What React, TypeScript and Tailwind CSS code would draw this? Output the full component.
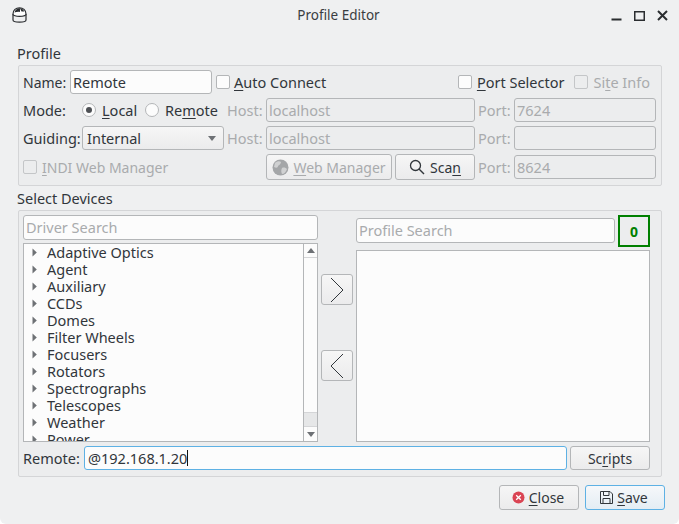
import React from "react";

const font = { fontFamily: '"Noto Sans", sans-serif' };

function Field({ value, placeholder, className = "", disabled = false }: { value?: string; placeholder?: string; className?: string; disabled?: boolean }) {
  return (
    <div className={`h-6 flex items-center rounded-[3px] border border-[#b4b6b8] px-[2px] text-[14.5px] shrink-0 ${disabled ? "bg-[#ecedee] text-[#a9abad]" : "bg-[#fcfcfc] text-[#31363b]"} ${className}`}>
      {value}
      {placeholder && <span className="text-[#a9abad]">{placeholder}</span>}
    </div>
  );
}

function Check({ disabled = false }: { disabled?: boolean }) {
  return <span className={`block w-[14px] h-[14px] shrink-0 rounded-[2px] border ${disabled ? "border-[#c4c6c8] bg-[#ecedee]" : "border-[#b4b6b8] bg-[#fcfcfc]"}`} />;
}

function Radio({ on = false }: { on?: boolean }) {
  return (
    <span className="w-[14px] h-[14px] shrink-0 rounded-full border border-[#b4b6b8] bg-[#fcfcfc] flex items-center justify-center">
      {on && <span className="w-[6px] h-[6px] rounded-full bg-[#4d5054]" />}
    </span>
  );
}

function Btn({ children, className = "", focused = false }: { children: React.ReactNode; className?: string; focused?: boolean }) {
  return (
    <div className={`flex items-center justify-center rounded-[3px] border bg-gradient-to-b text-[14px] shrink-0 ${focused ? "border-[#5eb1e4] from-[#f6f8fa] to-[#e4edf4]" : "border-[#b4b6b8] from-[#f6f6f6] to-[#ebebec]"} ${className}`}>
      {children}
    </div>
  );
}

function Triangle() {
  return (
    <svg width="5" height="9" viewBox="0 0 5 9" className="shrink-0">
      <path d="M0.5 0.5 L4.8 4.5 L0.5 8.5 Z" fill="#6e7175" />
    </svg>
  );
}

const categories = ["Adaptive Optics", "Agent", "Auxiliary", "CCDs", "Domes", "Filter Wheels", "Focusers", "Rotators", "Spectrographs", "Telescopes", "Weather", "Power"];

export default function App() {
  return (
    <div style={font} className="w-[679px] h-[524px] bg-[#eff0f1] text-[#31363b] text-[14.5px] leading-[17px] flex flex-col overflow-hidden rounded-b-[6px]">
      {/* Title bar */}
      <div className="h-[30px] flex items-center pl-[12px] pr-[11px] shrink-0">
        <div className="w-[60px] shrink-0 flex">
          <svg width="15" height="16" viewBox="0 0 15 16" className="shrink-0">
            <path d="M1 7 V13 C1 14.5 4 15.2 7.5 15.2 C11 15.2 14 14.5 14 13 V7" fill="none" stroke="#2a2d30" strokeWidth="1.2" />
            <path d="M1 7 C1 3 4 0.8 7.5 0.8 C11 0.8 14 3 14 7 C14 8.6 11 9.4 7.5 9.4 C4 9.4 1 8.6 1 7 Z" fill="#fff" stroke="#2a2d30" strokeWidth="1.2" />
            <path d="M2.5 5.5 C3 3 5 1.2 8 1.2 L8 5 C6 4.6 4 5 2.5 5.5 Z" fill="#2a2d30" />
            <path d="M8 1.2 C10 1.2 11.5 2.6 12.3 4.6 L9.5 4.4 Z" fill="#2a2d30" />
          </svg>
        </div>
        <div className="flex-1 text-center pr-[3px] text-[#3a3d41] text-[13.5px]">Profile Editor</div>
        <div className="w-[60px] flex items-center gap-[12px] justify-end shrink-0">
          <svg width="11" height="11" viewBox="0 0 11 11" className="shrink-0"><rect x="0.5" y="8.5" width="10" height="2" fill="#2a2d30" /></svg>
          <svg width="11" height="11" viewBox="0 0 11 11" className="shrink-0"><rect x="0.75" y="1.75" width="9.5" height="8.5" fill="none" stroke="#2a2d30" strokeWidth="1.5" /></svg>
          <svg width="11" height="11" viewBox="0 0 11 11" className="shrink-0"><path d="M1 1 L10 10 M10 1 L1 10" stroke="#2a2d30" strokeWidth="2" /></svg>
        </div>
      </div>

      {/* Profile group */}
      <div className="pl-[17px] mt-[14px] h-[18px] flex items-center shrink-0">Profile</div>
      <div className="ml-[18px] w-[644px] h-[121px] mt-[3px] border border-[#d4d5d7] rounded-[2px] bg-[#ecedee] pl-[4px] pr-[5px] pt-[4px] flex flex-col gap-[4px] shrink-0">
        <div className="flex items-center h-6">
          <span className="w-[47px] text-[14px]">Name:</span>
          <Field value="Remote" className="w-[142px]" />
          <span className="ml-[4px]"><Check /></span>
          <span className="ml-[4px]"><u className="underline-offset-2">A</u>uto Connect</span>
          <div className="flex-1" />
          <Check />
          <span className="ml-[5px]"><u className="underline-offset-2">P</u>ort Selector</span>
          <span className="ml-[10px]"><Check disabled /></span>
          <span className="ml-[5px] mr-[6px] text-[#a9abad]">Si<u className="underline-offset-2">t</u>e Info</span>
        </div>
        <div className="flex items-center h-6">
          <span className="w-[59px]">Mode:</span>
          <Radio on />
          <span className="ml-[6px] w-[43px]"><u className="underline-offset-2">L</u>ocal</span>
          <Radio />
          <span className="ml-[6px] w-[62px]">Re<u className="underline-offset-2">m</u>ote</span>
          <span className="w-[39px] text-[#a9abad]">Host:</span>
          <Field disabled value="localhost" className="w-[209px]" />
          <span className="ml-[3px] w-[36px] text-[#a9abad]">Port:</span>
          <Field disabled value="7624" className="w-[142px]" />
        </div>
        <div className="flex items-center h-6">
          <span className="w-[59px]">Guiding:</span>
          <div className="w-[142px] h-6 rounded-[3px] border border-[#b4b6b8] bg-gradient-to-b from-[#f6f6f6] to-[#ebebec] flex items-center pl-[4px] pr-[7px] justify-between shrink-0">
            <span>Internal</span>
            <svg width="8" height="5" viewBox="0 0 8 5"><path d="M0 0 H8 L4 5 Z" fill="#6e7175" /></svg>
          </div>
          <span className="ml-[3px] w-[39px] text-[#a9abad]">Host:</span>
          <Field disabled value="localhost" className="w-[209px]" />
          <span className="ml-[3px] w-[36px] text-[#a9abad]">Port:</span>
          <Field disabled className="w-[142px]" />
        </div>
        <div className="flex items-center h-[26px]">
          <Check disabled />
          <span className="ml-[5px] w-[224px] text-[14px] text-[#a9abad]"><u className="underline-offset-2">I</u>NDI Web Manager</span>
          <Btn className="w-[126px] h-[26px] text-[#a9abad] gap-[4px]">
            <svg width="17" height="17" viewBox="0 0 17 17" className="shrink-0">
              <circle cx="8.5" cy="8.5" r="8" fill="#a4a6a8" />
              <path d="M3 4 C5 2 8 2 9 3 C9 5 7 6 6 7 C6 9 4 9 2 8 Z M10 9 C12 8 14 9 15 10 C14 13 12 15 10 15 C9 13 9 11 10 9 Z" fill="#d0d1d2" />
            </svg>
            <span><u className="underline-offset-2">W</u>eb Manager</span>
          </Btn>
          <Btn className="ml-[3px] w-[80px] h-[26px] gap-[5px]">
            <svg width="16" height="16" viewBox="0 0 16 16" className="shrink-0">
              <circle cx="6.5" cy="6.5" r="5" fill="none" stroke="#31363b" strokeWidth="1.3" />
              <path d="M10 10 L15 15" stroke="#31363b" strokeWidth="1.4" />
            </svg>
            <span>Sca<u className="underline-offset-2">n</u></span>
          </Btn>
          <span className="ml-[3px] w-[36px] text-[#a9abad]">Port:</span>
          <Field disabled value="8624" className="w-[142px]" />
        </div>
      </div>

      {/* Select Devices group */}
      <div className="pl-[17px] mt-[3px] h-[18px] flex items-center shrink-0">Select Devices</div>
      <div className="ml-[18px] w-[644px] h-[267px] mt-[3px] border border-[#d4d5d7] rounded-[2px] bg-[#ecedee] pl-[4px] pr-[11px] pt-[4px] flex flex-col shrink-0">
        <div className="flex h-[227px]">
          <div className="w-[295px] flex flex-col gap-[3px] shrink-0">
            <Field placeholder="Driver Search" className="w-[295px] h-[25px]" />
            <div className="h-[199px] border border-[#b4b6b8] bg-[#fcfcfc] flex overflow-hidden">
              <div className="flex-1 flex flex-col overflow-hidden">
                {categories.map((c) => (
                  <div key={c} className="h-[17px] shrink-0 flex items-center pl-[8px] gap-[10px]">
                    <Triangle />
                    <span className="leading-[17px]">{c}</span>
                  </div>
                ))}
              </div>
              <div className="w-[14px] border-l border-[#b4b6b8] flex flex-col shrink-0">
                <div className="h-[14px] flex items-center justify-center border-b border-[#d4d5d7]">
                  <svg width="8" height="5" viewBox="0 0 8 5"><path d="M0 5 H8 L4 0 Z" fill="#6e7175" /></svg>
                </div>
                <div className="flex-1" />
                <div className="h-[15px] bg-[#e6e7e8] border-y border-[#d4d5d7]" />
                <div className="h-[14px] flex items-center justify-center">
                  <svg width="8" height="5" viewBox="0 0 8 5"><path d="M0 0 H8 L4 5 Z" fill="#6e7175" /></svg>
                </div>
              </div>
            </div>
          </div>
          <div className="w-[38px] flex flex-col items-center pt-[59px] gap-[45px] shrink-0">
            <Btn className="w-[32px] h-[31px]">
              <svg width="14" height="26" viewBox="0 0 14 26"><path d="M1 1 L13 13 L1 25" fill="none" stroke="#31363b" strokeWidth="1" /></svg>
            </Btn>
            <Btn className="w-[32px] h-[31px]">
              <svg width="14" height="26" viewBox="0 0 14 26"><path d="M13 1 L1 13 L13 25" fill="none" stroke="#31363b" strokeWidth="1" /></svg>
            </Btn>
          </div>
          <div className="w-[294px] flex flex-col gap-[3px] shrink-0">
            <div className="flex h-[32px] items-start justify-between">
              <Field placeholder="Profile Search" className="w-[259px] h-[25px] mt-[3px]" />
              <div className="w-[32px] h-[32px] border-2 border-[#008000] flex items-center justify-center font-bold text-[#008000] text-[14px]">0</div>
            </div>
            <div className="h-[192px] border border-[#b4b6b8] bg-[#fcfcfc]" />
          </div>
        </div>
        <div className="flex items-center h-6 mt-[4px]">
          <span className="w-[61px]">Remote:</span>
          <div className="w-[483px] h-6 rounded-[3px] border border-[#5eb1e4] bg-[#fcfcfc] flex items-center px-[3px] shrink-0">
            <span>@192.168.1.20</span>
            <span className="w-px h-[16px] bg-[#111]" />
          </div>
          <Btn className="ml-[3px] w-[80px] h-6">
            <span>Sc<u className="underline-offset-2">r</u>ipts</span>
          </Btn>
        </div>
      </div>

      {/* Bottom buttons */}
      <div className="flex justify-end gap-[6px] pr-[14px] mt-[8px] shrink-0">
        <Btn className="w-[80px] h-[25px] gap-[4px] pr-[2px]">
          <svg width="13" height="13" viewBox="0 0 13 13" className="shrink-0">
            <circle cx="6.5" cy="6.5" r="6" fill="#da4453" />
            <path d="M4.2 4.2 L8.8 8.8 M8.8 4.2 L4.2 8.8" stroke="#fff" strokeWidth="1.3" />
          </svg>
          <span><u className="underline-offset-2">C</u>lose</span>
        </Btn>
        <Btn focused className="w-[80px] h-[25px] gap-[4px] pr-[2px]">
          <svg width="13" height="13" viewBox="0 0 13 13" className="shrink-0">
            <path d="M0.5 0.5 H10 L12.5 3 V12.5 H0.5 Z" fill="none" stroke="#31363b" strokeWidth="1" />
            <path d="M3.5 1 V4.5 H9 V1" fill="none" stroke="#31363b" strokeWidth="1" />
            <path d="M3 12 V7.5 H10 V12" fill="none" stroke="#31363b" strokeWidth="1" />
          </svg>
          <span><u className="underline-offset-2">S</u>ave</span>
        </Btn>
      </div>
    </div>
  );
}
